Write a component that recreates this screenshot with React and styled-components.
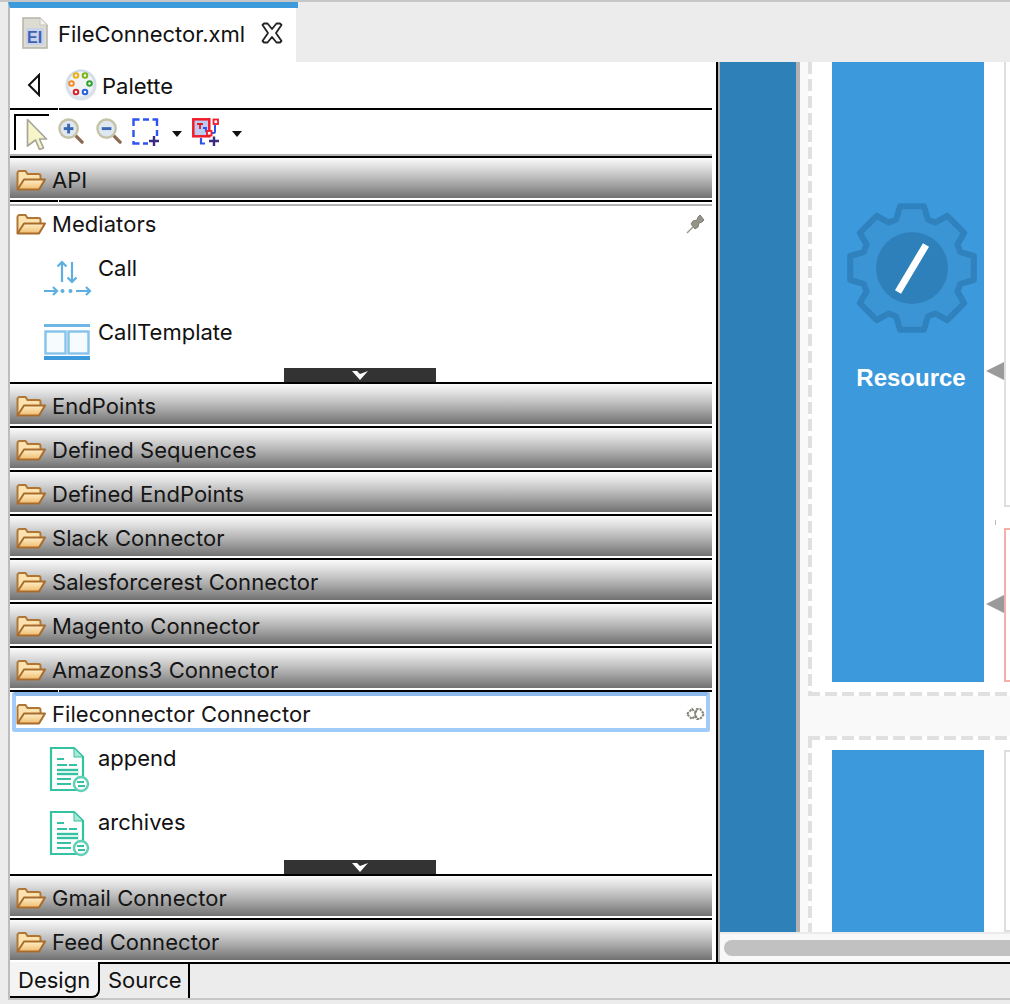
import React from "react";
import styled, { createGlobalStyle } from "styled-components";

const GlobalStyle = createGlobalStyle`
  html, body {
    margin: 0;
    padding: 0;
    background: #ececec;
  }
  * {
    box-sizing: border-box;
  }
`;

const Window = styled.div`
  width: 1010px;
  height: 1004px;
  overflow: hidden;
  display: flex;
  flex-direction: column;
  background: #ececec;
  border-top: 2px solid #c6c6c6;
  font-family: Inter, "Liberation Sans", sans-serif;
  font-size: 22px;
  color: #111;
`;

const TabBar = styled.div`
  height: 60px;
  flex: none;
  padding-left: 8px;
  display: flex;
`;

const EditorTab = styled.div`
  width: 290px;
  height: 60px;
  padding-left: 12px;
  border-left: 2px solid #bdbdbd;
  border-top: 6px solid #3d9bdc;
  background: linear-gradient(to right, #fff 0, #fff 286px, #ececec 286px);
  display: flex;
  align-items: center;
`;

const TabLabel = styled.span`
  margin-left: 10px;
  margin-right: 16px;
  padding-top: 2px;
  padding-bottom: 4px;
`;

const Body = styled.div`
  height: 900px;
  flex: none;
  margin-left: 8px;
  border-left: 2px solid #bdbdbd;
  display: flex;
`;

const Palette = styled.div`
  width: 708px;
  flex: none;
  background: #fff;
  border-right: 2px solid #000;
  padding-right: 4px;
  display: flex;
  flex-direction: column;
`;

const TitleRow = styled.div`
  height: 46px;
  display: flex;
  align-items: center;
  padding-left: 17px;
  flex: none;
`;

const PaletteName = styled.span`
  margin-left: 5px;
  padding-top: 2px;
`;

const Rule = styled.div`
  height: 2px;
  flex: none;
  background: linear-gradient(to right, #000 0, #000 48px, #fff 48px, #fff 49px, #000 49px);
`;

const Toolbar = styled.div`
  height: 44px;
  flex: none;
  display: flex;
  align-items: flex-start;
  padding: 4px 0 0 4px;
`;

const SelectedTool = styled.div`
  width: 35px;
  height: 36px;
  border-top: 2px solid #000;
  border-left: 2px solid #000;
  padding: 2px 0 0 10px;
  margin-right: 9px;
`;

const ToolIcon = styled.svg`
  flex: none;
  margin-top: 4px;
  margin-right: ${p => p.$gap || 0}px;
`;

const Caret = styled.span`
  flex: none;
  width: 0;
  height: 0;
  margin: 17px ${p => p.$right || 0}px 0 12px;
  border-left: 5px solid transparent;
  border-right: 5px solid transparent;
  border-top: 6px solid #111;
`;

const GrayLine = styled.div`
  height: 2px;
  flex: none;
  background: #b4b4b4;
`;

const WhiteGap = styled.div`
  height: 2px;
  flex: none;
`;

const Drawer = styled.div`
  height: 44px;
  flex: none;
  border-top: 2px solid #000;
  border-bottom: 2px solid #fff;
  padding: 4px 0 0 6px;
  display: flex;
  align-items: center;
  gap: 6px;
  background: linear-gradient(to bottom, #fbfbfb 0%, #dcdcdc 25%, #aaaaaa 62%, #717171 100%);
`;

const DrawerLabel = styled.span`
  color: #151515;
  letter-spacing: 0.05px;
`;

const OpenDrawer = styled.div`
  position: relative;
  flex: none;
  height: ${p => p.$height}px;
`;

const SectionHead = styled.div`
  height: 36px;
  padding: 0 6px;
  display: flex;
  align-items: center;
  gap: 6px;
`;

const FocusRing = styled.div`
  height: 40px;
  margin: 0 2px;
  padding-top: 4px;
  display: flex;
  align-items: center;
  gap: 6px;
  border: 4px solid #a0ccf9;
  border-top: 4px solid #8cb8ea;
  border-radius: 3px;
`;

const Spacer = styled.div`
  flex: 1;
`;

const EntryRow = styled.div`
  height: 64px;
  padding-left: 34px;
  margin-top: ${p => (p.$first ? 8 : 0)}px;
  display: flex;
  align-items: flex-start;
`;

const EntryIcon = styled.svg`
  flex: none;
  margin-top: ${p => p.$top}px;
  margin-right: 6px;
`;

const EntryLabel = styled.span`
  line-height: 36px;
`;

const ScrollHandle = styled.div`
  position: absolute;
  left: 274px;
  bottom: 0;
  width: 152px;
  height: 14px;
  background: #333;
  display: flex;
  justify-content: center;
`;

const Canvas = styled.div`
  flex: 1;
  min-width: 0;
  display: flex;
  flex-direction: column;
  border-left: 2px solid #b4b4b4;
`;

const Lanes = styled.div`
  height: 870px;
  flex: none;
  display: flex;
  overflow: hidden;
  background: #f9f9f9;
`;

const OuterLane = styled.div`
  width: 76px;
  flex: none;
  background: #2e80b8;
`;

const LaneEdge = styled.div`
  width: 4px;
  flex: none;
  background: #b2b2b2;
`;

const Sequences = styled.div`
  width: 400px;
  flex: none;
  padding-left: 8px;
  display: flex;
  flex-direction: column;
`;

const dashV = "repeating-linear-gradient(to bottom, #e0e0e0 0 12px, transparent 12px 17px)";
const dashH = "repeating-linear-gradient(to right, #e0e0e0 0 12px, transparent 12px 17px)";

const FirstSequence = styled.section`
  height: 634px;
  flex: none;
  display: flex;
  padding: 0 0 14px 24px;
  background-color: #fff;
  background-image: ${dashV}, ${dashH};
  background-repeat: no-repeat;
  background-size: 4px 100%, 100% 4px;
  background-position: left top, left bottom;
`;

const SecondSequence = styled.section`
  margin-top: 40px;
  flex: 1;
  display: flex;
  padding: 14px 0 0 24px;
  background-color: #fff;
  background-image: ${dashV}, ${dashH};
  background-repeat: no-repeat;
  background-size: 4px 100%, 100% 4px;
  background-position: left top, left top;
`;

const ResourceBlock = styled.div`
  width: 152px;
  flex: none;
  background: #3c99db;
  display: flex;
  flex-direction: column;
  align-items: center;
  padding: 140px 0 0 7px;
`;

const ResourceName = styled.div`
  font-family: "Liberation Sans", Arial, sans-serif;
  font-weight: 700;
  font-size: 24px;
  color: #fff;
  margin-top: 30px;
  margin-left: -1px;
`;

const Flows = styled.div`
  margin-left: 20px;
  flex: 1;
  display: flex;
  flex-direction: column;
  gap: 21px;
`;

const FlowBox = styled.div`
  position: relative;
  flex: ${p => (p.$fill ? 1 : "none")};
  height: ${p => (p.$height ? `${p.$height}px` : "auto")};
  background: #fff;
  border: 2px solid ${p => p.$border};
  border-top-width: ${p => (p.$noTop ? 0 : 2)}px;
  border-right: 0;
`;

const Arrowhead = styled.span`
  position: absolute;
  left: -20px;
  top: ${p => p.$top}px;
  width: 0;
  height: 0;
  border-top: 9px solid transparent;
  border-bottom: 9px solid transparent;
  border-right: 18px solid #9a9a9a;
`;

const Tick = styled.span`
  position: absolute;
  left: -11px;
  top: -10px;
  width: 1px;
  height: 5px;
  background: #bdbdbd;
`;

const HScroll = styled.div`
  height: 30px;
  flex: none;
  background: #f8f8f8;
  border-top: 2px solid #ebebeb;
  padding: 6px 0 0 4px;
`;

const HThumb = styled.div`
  height: 16px;
  background: #c1c1c1;
  border-radius: 8px 0 0 8px;
`;

const Footer = styled.div`
  height: 36px;
  flex: none;
  margin-left: 8px;
  border-left: 2px solid #bdbdbd;
  display: flex;
`;

const DesignTab = styled.div`
  width: 90px;
  background: #f4f4f4;
  border-right: 2px solid #000;
  border-bottom: 2px solid #000;
  border-bottom-right-radius: 8px;
  padding-left: 8px;
  line-height: 36px;
`;

const SourceTab = styled.div`
  width: 90px;
  border-top: 2px solid #000;
  border-right: 2px solid #000;
  padding-left: 8px;
  line-height: 32px;
`;

const FooterRest = styled.div`
  flex: 1;
  border-top: 2px solid #000;
`;

const BottomEdge = styled.div`
  margin-left: 8px;
  height: 2px;
  flex: none;
  background: #c4c6c8;
`;

const FolderIcon = () => (
  <svg width="30" height="22" viewBox="0 0 30 22" style={{ flex: "none" }}>
    <defs>
      <linearGradient id="folderFront" x1="0" y1="0" x2="0" y2="1">
        <stop offset="0" stopColor="#ffefc8" />
        <stop offset="1" stopColor="#efbc6e" />
      </linearGradient>
    </defs>
    <path d="M1.500 20V4a2 2 0 0 1 2-2h6l2 3h11a2 2 0 0 1 2 2v3" fill="#fbe2ae" stroke="#b07636" strokeWidth="2" />
    <path d="M1.500 20.500 8 10.500h21L23 20.500Z" fill="url(#folderFront)" stroke="#a96c2d" strokeWidth="2" strokeLinejoin="round" />
  </svg>
);

const FileIcon = () => (
  <svg width="26" height="32" viewBox="0 0 26 32" style={{ flex: "none", marginBottom: 4 }}>
    <path d="M1 1h17l7 7v23H1Z" fill="#dcdcd2" stroke="#b4b4a8" strokeWidth="1.500" />
    <path d="M18 1v7h7" fill="#f2f2ee" stroke="#c4c4ba" strokeWidth="1" />
    <rect x="4" y="11" width="18" height="17" fill="#c9d2e6" />
    <text x="5" y="26" fontFamily="Liberation Sans, sans-serif" fontWeight="700" fontSize="16" fill="#3f62b4">EI</text>
  </svg>
);

const CloseIcon = () => (
  <svg width="22" height="22" viewBox="0 0 22 22" style={{ flex: "none", marginBottom: 4 }}>
    <path d="M3 1.500h3.500L11 7l4.500-5.500H19L20.500 3 15 11l5.500 8L19 20.500h-3.500L11 15l-4.500 5.500H3L1.500 19 7 11 1.500 3Z" fill="#fff" stroke="#222" strokeWidth="1.800" strokeLinejoin="round" />
  </svg>
);

const BackIcon = () => (
  <svg width="14" height="24" viewBox="0 0 14 24" style={{ flex: "none", marginRight: 24 }}>
    <path d="M12 2 2 12l10 10Z" fill="#fff" stroke="#111" strokeWidth="2" />
  </svg>
);

const PaletteDot = ({ x, y, color }) => (
  <circle cx={x} cy={y} r="2.300" fill="#fff" stroke={color} strokeWidth="2" />
);

const PaletteIcon = () => (
  <svg width="32" height="32" viewBox="0 0 32 32" style={{ flex: "none" }}>
    <defs>
      <linearGradient id="paletteRim" x1="0" y1="0" x2="0" y2="1">
        <stop offset="0" stopColor="#c9d8ea" />
        <stop offset="1" stopColor="#dfe4ea" />
      </linearGradient>
    </defs>
    <circle cx="16" cy="16" r="15.500" fill="url(#paletteRim)" />
    <circle cx="16" cy="15" r="12.500" fill="#f0f3f6" />
    <PaletteDot x={11} y={6.500} color="#f0ae10" />
    <PaletteDot x={20} y={6.500} color="#7cb518" />
    <PaletteDot x={6.500} y={14.500} color="#f08a24" />
    <PaletteDot x={24.500} y={14.500} color="#2da32d" />
    <PaletteDot x={11} y={23} color="#d8242a" />
    <PaletteDot x={20} y={23} color="#2a62d8" />
  </svg>
);

const ArrowTool = () => (
  <svg width="22" height="32" viewBox="0 0 22 32">
    <path d="M1.500 1.500 20.500 21h-7l4 9-4 1.500-4-9.500-8 6Z" fill="#f6f4c8" stroke="#a6a69a" strokeWidth="1.700" strokeLinejoin="round" />
  </svg>
);

const ZoomTool = ({ minus, gap }) => (
  <ToolIcon width="26" height="27" viewBox="0 0 27 28" $gap={gap}>
    <path d="M17 17l8 8" stroke="#8a6a52" strokeWidth="3.500" strokeLinecap="round" />
    <circle cx="11" cy="11" r="9.500" fill="#dfe7f0" stroke="#c5c3a6" strokeWidth="2.500" />
    <path d="M6 11h10" stroke="#3b67b0" strokeWidth="3" />
    {!minus && <path d="M11 6v10" stroke="#3b67b0" strokeWidth="3" />}
  </ToolIcon>
);

const MarqueeTool = () => (
  <ToolIcon width="28" height="28" viewBox="0 0 28 28">
    <path d="M1.500 8V1.500h6M11 1.500h6M20.500 1.500h4.500V8M25 12v6M1.500 12v7M1.500 23v2.500h6M11 25.500h5" fill="none" stroke="#2e54ee" strokeWidth="2.400" />
    <path d="M22 18v10M17 23h10" stroke="#3a2a80" strokeWidth="2.400" />
  </ToolIcon>
);

const ConnectionTool = () => (
  <ToolIcon width="28" height="28" viewBox="0 0 28 28">
    <rect x="1.300" y="1.300" width="16" height="17" fill="#bccbf0" stroke="#f01c2c" strokeWidth="2.500" />
    <path d="M5 6h6M8 6v5" stroke="#e01c2c" strokeWidth="1.800" />
    <path d="M11 10h3v4" fill="none" stroke="#2e54ee" strokeWidth="1.800" />
    <path d="M16 15h5.500a1.500 1.500 0 0 0 1.500-1.500V7" fill="none" stroke="#2e54ee" strokeWidth="2" />
    <rect x="21.500" y="1.500" width="4.500" height="4.500" fill="#fff" stroke="#f01c2c" strokeWidth="1.800" />
    <rect x="15" y="13" width="4.500" height="4.500" fill="#fff" stroke="#f01c2c" strokeWidth="1.800" />
    <path d="M9 20v5.500h4" fill="none" stroke="#2e54ee" strokeWidth="2.200" />
    <path d="M22 18.500v9.500M17 23h10" stroke="#3a2a80" strokeWidth="2.400" />
  </ToolIcon>
);

const PinIcon = () => (
  <svg width="20" height="20" viewBox="0 0 20 20" style={{ flex: "none" }}>
    <path d="M1 19l6-6" stroke="#9a9a90" strokeWidth="1.500" />
    <path d="M5 10l4 5 3-2 1-4 3-1 2-2-4-5-2 2-1 3-4 1Z" fill="#94948a" stroke="#7c7c72" />
  </svg>
);

const UnpinIcon = () => (
  <svg width="20" height="16" viewBox="0 0 20 16" style={{ flex: "none" }}>
    <path d="M1 8l5-5 3 3 2-3 3 0 4 5-4 5-3 0-2-3-3 3Z" fill="#fff" stroke="#85857a" strokeWidth="2" strokeDasharray="2.500 1" />
    <path d="M11 4l-2 4 2 4" fill="none" stroke="#85857a" strokeWidth="1.500" />
  </svg>
);

const CallIcon = () => (
  <EntryIcon $top={10} width="48" height="38" viewBox="0 0 48 38">
    <g fill="none" stroke="#5dafe2" strokeWidth="2.200">
      <path d="M18 22V2M13.500 6.500 18 2l4.500 4.500" />
      <path d="M28 2v20M23.500 17.500 28 22l4.500-4.500" />
      <path d="M0 31h13M9 27l4 4-4 4" />
      <path d="M32 31h14M42 27l4 4-4 4" />
    </g>
    <g fill="#5dafe2">
      <circle cx="18.500" cy="31" r="2" />
      <circle cx="26.500" cy="31" r="2" />
    </g>
  </EntryIcon>
);

const TemplateIcon = () => (
  <EntryIcon $top={10} width="48" height="36" viewBox="0 0 48 36">
    <rect x="0" y="0" width="46" height="3" fill="#6db6e6" />
    <rect x="1.500" y="7.500" width="20" height="22" fill="#f6fbfe" stroke="#86c2ea" strokeWidth="2.400" />
    <rect x="24.500" y="7.500" width="20" height="22" fill="#f6fbfe" stroke="#86c2ea" strokeWidth="2.400" />
    <rect x="0" y="32" width="46" height="4" fill="#3c99db" />
  </EntryIcon>
);

const ConnectorDocIcon = () => (
  <EntryIcon $top={7} width="48" height="46" viewBox="0 0 48 46">
    <g transform="translate(6 0)">
      <path d="M1 1h23l9 9v33H1Z" fill="#fff" stroke="#34c2a2" strokeWidth="2.200" />
      <path d="M24 1v9h9Z" fill="#a8e6d6" stroke="#34c2a2" />
      <rect x="7" y="21" width="22" height="8" fill="#d6f3ec" />
      <path d="M7 12h7M7 18h10M19 18h8M7 23h21M7 27h21M7 32h14M7 37h14" stroke="#34c2a2" strokeWidth="1.800" />
      <circle cx="31" cy="37" r="7" fill="#fff" stroke="#5ed0b8" strokeWidth="2.400" />
      <path d="M27 35h7M35 39h-7" stroke="#34c2a2" strokeWidth="2" />
    </g>
  </EntryIcon>
);

const ScrollChevron = () => (
  <svg width="16" height="14" viewBox="0 0 16 14">
    <path d="M0 3h5l3 3 8-3-8 9Z" fill="#fff" />
  </svg>
);

// 8 teeth, one straight up
const gearPath = () => {
  const pt = (deg, r) => {
    const a = ((deg - 90) * Math.PI) / 180;
    return `${(66 + r * Math.cos(a)).toFixed(1)} ${(66 + r * Math.sin(a)).toFixed(1)}`;
  };
  let points = [];
  for (let i = 0; i < 8; i++) {
    const c = i * 45;
    points.push(pt(c - 18, 51), pt(c - 11, 63), pt(c + 11, 63), pt(c + 18, 51));
  }
  return "M" + points.join("L") + "Z";
};

const GearIcon = () => (
  <svg width="132" height="132" viewBox="0 0 132 132" style={{ flex: "none" }}>
    <path d={gearPath()} fill="#3b95d4" stroke="#2f82bd" strokeWidth="6" strokeLinejoin="round" />
    <circle cx="66" cy="66" r="36" fill="#2e80bb" />
    <path d="M80 43 52 90" stroke="#fff" strokeWidth="7" />
  </svg>
);

const closedBefore = [
  "EndPoints",
  "Defined Sequences",
  "Defined EndPoints",
  "Slack Connector",
  "Salesforcerest Connector",
  "Magento Connector",
  "Amazons3 Connector"
];

const closedAfter = ["Gmail Connector", "Feed Connector"];

const ClosedDrawer = ({ label }) => (
  <Drawer>
    <FolderIcon />
    <DrawerLabel>{label}</DrawerLabel>
  </Drawer>
);

const App = () => {
  return (
    <Window>
      <GlobalStyle />
      <TabBar>
        <EditorTab>
          <FileIcon />
          <TabLabel>FileConnector.xml</TabLabel>
          <CloseIcon />
        </EditorTab>
      </TabBar>
      <Body>
        <Palette>
          <TitleRow>
            <BackIcon />
            <PaletteIcon />
            <PaletteName>Palette</PaletteName>
          </TitleRow>
          <Rule />
          <Toolbar>
            <SelectedTool>
              <ArrowTool />
            </SelectedTool>
            <ZoomTool gap={12} />
            <ZoomTool minus gap={10} />
            <MarqueeTool />
            <Caret $right={10} />
            <ConnectionTool />
            <Caret />
          </Toolbar>
          <GrayLine />
          <ClosedDrawer label="API" />
          <Rule />
          <WhiteGap />
          <GrayLine />
          <OpenDrawer $height={176}>
            <SectionHead>
              <FolderIcon />
              <DrawerLabel>Mediators</DrawerLabel>
              <Spacer />
              <PinIcon />
            </SectionHead>
            <EntryRow $first>
              <CallIcon />
              <EntryLabel>Call</EntryLabel>
            </EntryRow>
            <EntryRow>
              <TemplateIcon />
              <EntryLabel>CallTemplate</EntryLabel>
            </EntryRow>
            <ScrollHandle>
              <ScrollChevron />
            </ScrollHandle>
          </OpenDrawer>
          {closedBefore.map(label => (
            <ClosedDrawer key={label} label={label} />
          ))}
          <Rule />
          <OpenDrawer $height={182}>
            <FocusRing>
              <FolderIcon />
              <DrawerLabel>Fileconnector Connector</DrawerLabel>
              <Spacer />
              <UnpinIcon />
            </FocusRing>
            <EntryRow $first>
              <ConnectorDocIcon />
              <EntryLabel>append</EntryLabel>
            </EntryRow>
            <EntryRow>
              <ConnectorDocIcon />
              <EntryLabel>archives</EntryLabel>
            </EntryRow>
            <ScrollHandle>
              <ScrollChevron />
            </ScrollHandle>
          </OpenDrawer>
          {closedAfter.map(label => (
            <ClosedDrawer key={label} label={label} />
          ))}
        </Palette>
        <Canvas>
          <Lanes>
            <OuterLane />
            <LaneEdge />
            <Sequences>
              <FirstSequence>
                <ResourceBlock>
                  <GearIcon />
                  <ResourceName>Resource</ResourceName>
                </ResourceBlock>
                <Flows>
                  <FlowBox $height={445} $border="#dedede" $noTop>
                    <Arrowhead $top={300} />
                  </FlowBox>
                  <FlowBox $fill $border="#f4b0a8">
                    <Tick />
                    <Arrowhead $top={65} />
                  </FlowBox>
                </Flows>
              </FirstSequence>
              <SecondSequence>
                <ResourceBlock />
                <Flows>
                  <FlowBox $fill $border="#dedede" />
                </Flows>
              </SecondSequence>
            </Sequences>
          </Lanes>
          <HScroll>
            <HThumb />
          </HScroll>
        </Canvas>
      </Body>
      <Footer>
        <DesignTab>Design</DesignTab>
        <SourceTab>Source</SourceTab>
        <FooterRest />
      </Footer>
      <BottomEdge />
    </Window>
  );
};

export default App;
